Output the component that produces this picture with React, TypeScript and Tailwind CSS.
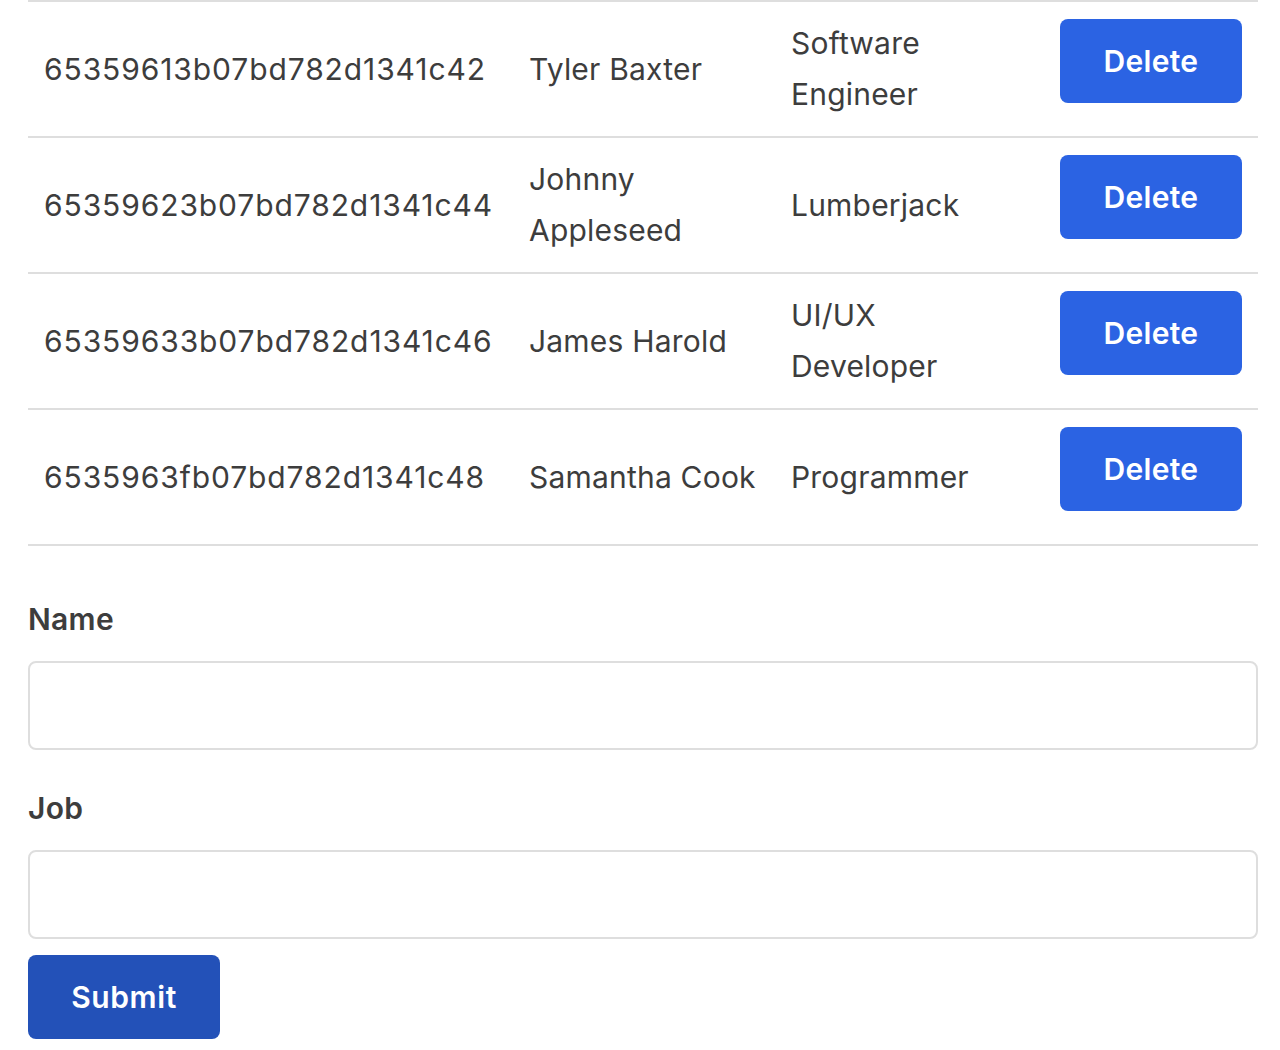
import React from "react";

const rows: { id: string; name: string[]; job: string[] }[] = [
  { id: "65359613b07bd782d1341c42", name: ["Tyler Baxter"], job: ["Software", "Engineer"] },
  { id: "65359623b07bd782d1341c44", name: ["Johnny", "Appleseed"], job: ["Lumberjack"] },
  { id: "65359633b07bd782d1341c46", name: ["James Harold"], job: ["UI/UX", "Developer"] },
  { id: "6535963fb07bd782d1341c48", name: ["Samantha Cook"], job: ["Programmer"] },
];

function Lines({ lines }: { lines: string[] }) {
  return (
    <>
      {lines.map((l, i) => (
        <div key={i} className="whitespace-nowrap">
          {l}
        </div>
      ))}
    </>
  );
}

export default function App() {
  return (
    <div
      className="min-h-[1050px] bg-white pl-[28px] pr-[22px] text-[30px] leading-[51px] text-[#3d3d3d]"
      style={{ fontFamily: "Inter, 'Noto Sans', sans-serif" }}
    >
      <div className="border-b-2 border-[#dedede]">
        {rows.map((r) => (
          <div
            key={r.id}
            className="grid grid-cols-[485px_262px_269px_214px] border-t-2 border-[#dedede] min-h-[136px]"
          >
            <div className="flex items-center px-4 py-4 tracking-[0.9px]">
              <Lines lines={[r.id]} />
            </div>
            <div className="flex flex-col justify-center px-4 py-4 tracking-[0.2px]">
              <Lines lines={r.name} />
            </div>
            <div className="flex flex-col justify-center px-4 py-4 tracking-[0.2px]">
              <Lines lines={r.job} />
            </div>
            <div className="flex items-center px-4">
              <button className="mb-4 h-[84px] w-[182px] rounded-[8px] bg-[#2b63e3] font-semibold tracking-[0.3px] text-white">
                Delete
              </button>
            </div>
          </div>
        ))}
      </div>

      <form className="mt-12" onSubmit={(e) => e.preventDefault()}>
        <label className="mb-4 block font-semibold tracking-[0.3px]">Name</label>
        <input className="mb-[33px] block h-[89px] w-full rounded-[8px] border-2 border-[#dedede] px-4 outline-none" />
        <label className="mb-4 block font-semibold tracking-[0.3px]">Job</label>
        <input className="mb-4 block h-[89px] w-full rounded-[8px] border-2 border-[#dedede] px-4 outline-none" />
        <button
          type="submit"
          className="h-[84px] w-[192px] rounded-[8px] bg-[#2351b8] font-semibold tracking-[0.6px] text-white"
        >
          Submit
        </button>
      </form>
    </div>
  );
}
